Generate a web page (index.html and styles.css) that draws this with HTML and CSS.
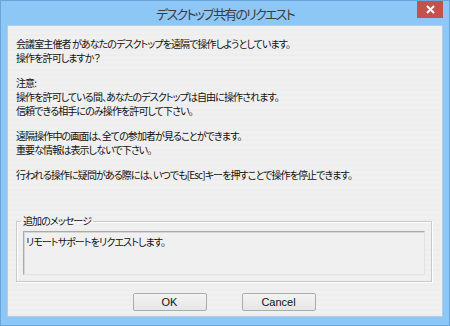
FILE: index.html
```html
<!DOCTYPE html>
<html lang="ja">
<head>
    <meta charset="UTF-8">
    <title>デスクトップ共有のリクエスト</title>
    <link rel="stylesheet" href="styles.css">
</head>
<body>
<div class="window">
    <div class="titlebar">
        <div></div>
        <div class="title">デスクトップ共有のリクエスト</div>
        <div class="title-right">
            <div class="close-btn">
                <svg width="9" height="9" viewBox="0 0 9 9">
                    <path d="M1 1 L8 8 M8 1 L1 8" stroke="#fff" stroke-width="2"/>
                </svg>
            </div>
        </div>
    </div>

    <div class="client">
        <div class="messages">
            <p>会議室主催者 があなたのデスクトップを遠隔で操作しようとしています。<br>操作を許可しますか？</p>
            <p>注意:<br>操作を許可している間、あなたのデスクトップは自由に操作されます。<br>信頼できる相手にのみ操作を許可して下さい。</p>
            <p>遠隔操作中の画面は、全ての参加者が見ることができます。<br>重要な情報は表示しないで下さい。</p>
            <p>行われる操作に疑問がある際には、いつでも[Esc]キーを押すことで操作を停止できます。</p>
        </div>

        <fieldset class="group">
            <legend>追加のメッセージ</legend>
            <div class="textbox">リモートサポートをリクエストします。</div>
        </fieldset>

        <div class="buttons">
            <button class="btn">OK</button>
            <button class="btn">Cancel</button>
        </div>
    </div>
</div>
</body>
</html>
```

FILE: styles.css
```css
body {
    margin: 0;
    font-family: "Noto Sans CJK JP", "Noto Sans", sans-serif;
}

.window {
    box-sizing: border-box;
    width: 450px;
    height: 326px;
    background-color: #8cc7f6;
    border: 1px solid #6aa6da;
    display: flex;
    flex-direction: column;
    padding: 0 6px 8px 6px;
}

/* Title bar */
.titlebar {
    height: 24px;
    display: grid;
    grid-template-columns: 1fr auto 1fr;
}

.title {
    font-size: 13px;
    line-height: 26px;
    letter-spacing: -1.8px;
    color: #3c3c3c;
    font-feature-settings: "palt";
}

.title-right {
    display: flex;
    justify-content: flex-end;
}

.close-btn {
    width: 26px;
    height: 17px;
    background-color: #c74f50;
    display: flex;
    align-items: center;
    justify-content: center;
}

/* Dialog body */
.client {
    flex: 1;
    background-color: #f0f0f0;
    background-image: repeating-linear-gradient(#f0f0f0 0px, #f0f0f0 3px, #ebebeb 4px, #f0f0f0 5px);
    border: 1px solid #b3cde4;
    display: flex;
    flex-direction: column;
    padding: 11px 10px 5px 8px;
    font-size: 10px;
    line-height: 14px;
    letter-spacing: -0.9px;
    color: #111;
    font-feature-settings: "palt";
}

.messages {
    flex: 1;
}

.messages p {
    margin: 0 0 11px;
}

.group {
    margin: 0;
    padding: 3px 6px 6px 6px;
    border: 1px solid #c9c9c9;
    box-shadow: inset 1px 1px 0 #fff, 1px 1px 0 #fff;
}

.group legend {
    padding: 0 2px;
    margin-left: -2px;
    color: #111;
}

.textbox {
    box-sizing: border-box;
    height: 44px;
    padding: 3px 2px;
    background-color: #f0f0f0;
    border: 1px solid #a9a9a9;
    border-right-color: #e2e2e2;
    border-bottom-color: #e2e2e2;
    box-shadow: inset 1px 1px 0 #d6d6d6;
}

.buttons {
    display: flex;
    justify-content: center;
    gap: 35px;
    margin-top: 11px;
}

.btn {
    width: 74px;
    height: 18px;
    padding: 0;
    font-family: "Liberation Sans", Arial, sans-serif;
    font-size: 11px;
    color: #111;
    background: linear-gradient(#f3f3f3, #e6e6e6);
    border: 1px solid #acacac;
    border-radius: 2px;
}
```
